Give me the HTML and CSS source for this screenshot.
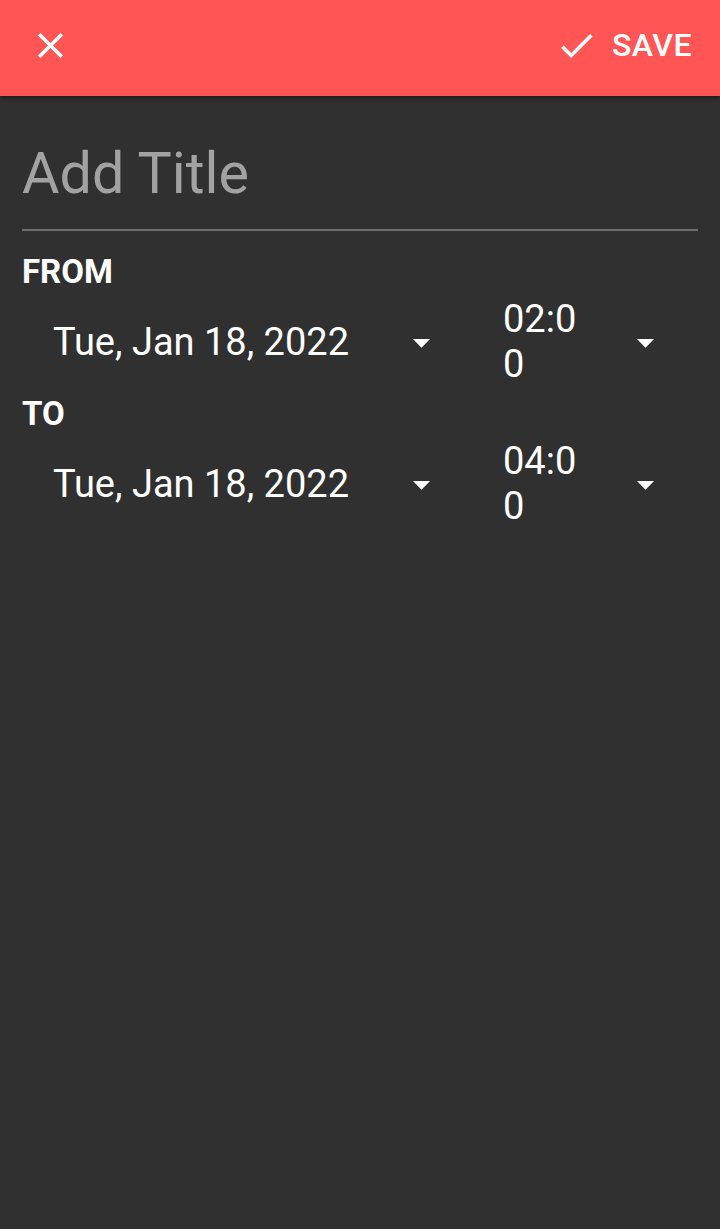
FILE: index.html
```html
<!DOCTYPE html>
<html>
<head>
<meta charset="utf-8">
<link rel="stylesheet" href="styles.css">
</head>
<body>
<header class="toolbar">
  <svg class="icon close" viewBox="0 0 24 24"><path d="M19 6.41L17.59 5 12 10.59 6.41 5 5 6.41 10.59 12 5 17.59 6.41 19 12 13.41 17.59 19 19 17.59 13.41 12z"/></svg>
  <div class="save">
    <svg class="icon" viewBox="0 0 24 24"><path d="M9 16.17L4.83 12l-1.42 1.41L9 19 21 7l-1.41-1.41z"/></svg>
    <span class="save-label">SAVE</span>
  </div>
</header>
<main class="content">
  <div class="title-field">Add Title</div>
  <div class="label">FROM</div>
  <div class="row">
    <div class="spinner date">
      <span class="value">Tue, Jan 18, 2022</span>
      <svg class="arrow" viewBox="0 0 24 24"><path d="M7 10l5 5 5-5z"/></svg>
    </div>
    <div class="spinner time">
      <span class="value">02:00</span>
      <svg class="arrow" viewBox="0 0 24 24"><path d="M7 10l5 5 5-5z"/></svg>
    </div>
  </div>
  <div class="label">TO</div>
  <div class="row">
    <div class="spinner date">
      <span class="value">Tue, Jan 18, 2022</span>
      <svg class="arrow" viewBox="0 0 24 24"><path d="M7 10l5 5 5-5z"/></svg>
    </div>
    <div class="spinner time">
      <span class="value">04:00</span>
      <svg class="arrow" viewBox="0 0 24 24"><path d="M7 10l5 5 5-5z"/></svg>
    </div>
  </div>
</main>
</body>
</html>
```

FILE: styles.css
```css
html, body {
  margin: 0;
  padding: 0;
  height: 100%;
  background: #303030;
  font-family: Roboto, "Liberation Sans", sans-serif;
  color: #ffffff;
}

.toolbar {
  position: relative;
  z-index: 1;
  height: 96px;
  box-sizing: border-box;
  padding: 0 28px 6px 29px;
  background: #ff5555;
  display: flex;
  align-items: center;
  justify-content: space-between;
  box-shadow: 0 2px 4px rgba(0, 0, 0, 0.45);
}

.icon {
  width: 43px;
  height: 43px;
  fill: #ffffff;
  display: block;
}

.save {
  display: flex;
  align-items: center;
  gap: 14px;
}

.save-label {
  font-size: 32px;
  font-weight: 500;
  line-height: 38px;
  letter-spacing: 0.5px;
}

.content {
  padding: 45px 22px 0 22px;
}

.title-field {
  font-size: 57.5px;
  line-height: 66px;
  color: #a2a2a2;
  padding-bottom: 22px;
  border-bottom: 2px solid #6f6f6f;
  margin-bottom: 22px;
}

.label {
  font-size: 33px;
  font-weight: 700;
  line-height: 38px;
}

.row {
  display: flex;
  align-items: center;
  margin: 6px 0 8px 0;
}

.spinner {
  display: flex;
  align-items: center;
  font-size: 38px;
  line-height: 45px;
}

.spinner.date {
  width: 420px;
  box-sizing: border-box;
  padding-left: 31px;
}

.spinner.date .value {
  flex: 1;
}

.spinner.time {
  padding-left: 61px;
}

.spinner.time .value {
  width: 80px;
  word-break: break-all;
}

.arrow {
  width: 41px;
  height: 41px;
  fill: #ffffff;
  display: block;
  flex: none;
}

.spinner.time .arrow {
  margin-left: 42px;
}
```
